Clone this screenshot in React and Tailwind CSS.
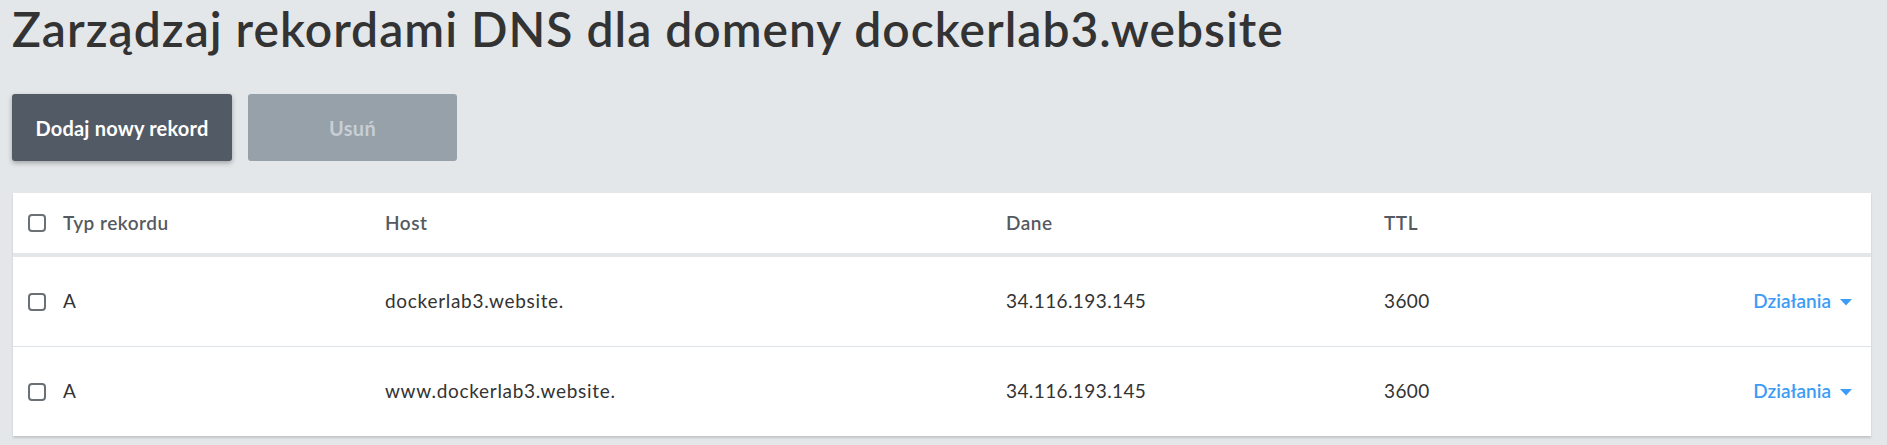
import { useState } from 'react'

// DNS records manager: title, two actions, and a flat white table.
const RECORDS = [
  { id: 1, type: 'A', host: 'dockerlab3.website.', data: '34.116.193.145', ttl: '3600' },
  { id: 2, type: 'A', host: 'www.dockerlab3.website.', data: '34.116.193.145', ttl: '3600' },
]

const COLS = 'grid grid-cols-[372px_621px_378px_1fr] items-center'

const Box = ({ checked, onChange }) => (
  <button
    type="button"
    role="checkbox"
    aria-checked={checked}
    onClick={onChange}
    className="h-[18px] w-[18px] shrink-0 rounded-[4px] border-2 border-[#6b7075] bg-white"
  />
)

const Caret = () => (
  <svg width="14" height="8" viewBox="0 0 14 8" aria-hidden="true" className="ml-[8px]">
    <path d="M1 1h12L7 7.5z" fill="currentColor" />
  </svg>
)

const App = () => {
  const [selected, setSelected] = useState({})
  const toggle = (id) => setSelected((s) => ({ ...s, [id]: !s[id] }))

  return (
    <div className="min-h-[445px] bg-[#e4e7ea] pt-[5px] pr-4 pl-3 font-['Lato',sans-serif] text-[#333333]">
      <h1 className="text-[48px] leading-none font-semibold tracking-[1px] text-[#333333]">
        Zarządzaj rekordami DNS dla domeny dockerlab3.website
      </h1>

      <div className="mt-[41px] flex gap-4">
        <button
          type="button"
          className="h-[67px] w-[220px] rounded-[3px] bg-[#525a66] text-[20px] font-bold tracking-[0.2px] text-white shadow-[0_2px_5px_rgba(0,0,0,0.3)]"
        >
          Dodaj nowy rekord
        </button>
        <button
          type="button"
          disabled
          className="h-[67px] w-[209px] rounded-[3px] bg-[#97a1aa] text-[20px] font-bold tracking-[0.3px] text-[#c8ced5]"
        >
          Usuń
        </button>
      </div>

      <div className="mt-8 ml-px bg-white shadow-[0_2px_2px_rgba(0,0,0,0.15)]">
        <div className={`${COLS} h-[64px] border-b-4 border-[#e4e7ea] text-[19px] font-semibold tracking-[0.5px] text-[#555a61]`}>
          <div className="flex items-center gap-[17px] pl-[15px]">
            <Box checked={false} onChange={() => {}} />
            <span>Typ rekordu</span>
          </div>
          <div>Host</div>
          <div>Dane</div>
          <div>TTL</div>
        </div>

        {RECORDS.map((r, i) => (
          <div
            key={r.id}
            className={`${COLS} text-[19px] tracking-[0.4px] ${i < RECORDS.length - 1 ? 'h-[90px] border-b border-[#dfe4ea]' : 'h-[89px]'}`}
          >
            <div className="flex items-center gap-[17px] pl-[15px]">
              <Box checked={!!selected[r.id]} onChange={() => toggle(r.id)} />
              <span>{r.type}</span>
            </div>
            <div className="tracking-[0.7px]">{r.host}</div>
            <div>{r.data}</div>
            <div className="flex items-center justify-between pr-[18px]">
              <span>{r.ttl}</span>
              <button type="button" className="flex items-center text-[19px] font-semibold tracking-normal text-[#3d9cf5]">
                Działania
                <Caret />
              </button>
            </div>
          </div>
        ))}
      </div>
    </div>
  )
}

export default App
